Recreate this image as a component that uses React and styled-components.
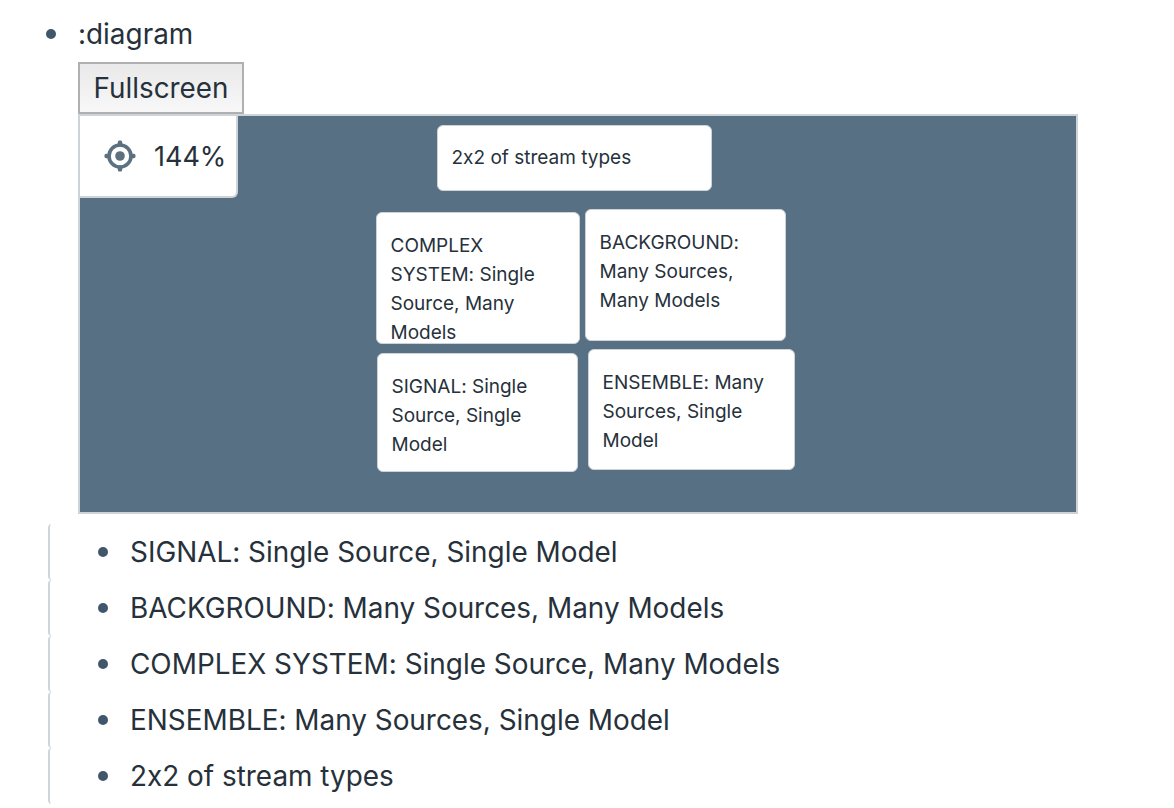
import React from "react";
import styled, { createGlobalStyle } from "styled-components";

const GlobalStyle = createGlobalStyle`
  html, body {
    margin: 0;
    background: #fff;
    overflow: hidden;
  }
  body {
    font-family: Inter, "Noto Sans", sans-serif;
    font-feature-settings: "calt" 0, "liga" 0;
    color: #26313b;
  }
`;

const Page = styled.div`
  width: 1174px;
  height: 808px;
  padding: 6px 0 0 38px;
  box-sizing: border-box;
  overflow: hidden;
`;

const Row = styled.div`
  display: flex;
  align-items: center;
  height: 56px;
  font-size: 27.9px;
  line-height: 56px;
  white-space: nowrap;
`;

const Dot = styled.span`
  flex: none;
  width: 10px;
  height: 10px;
  border-radius: 50%;
  background: #3f566b;
  margin-right: 22px;
  margin-left: 8px;
`;

const Body = styled.div`
  margin-left: 40px;
`;

const FullscreenButton = styled.button`
  display: block;
  width: 166px;
  height: 52px;
  padding: 0;
  box-sizing: border-box;
  border: 2px solid #b0b0b0;
  border-radius: 0;
  background: linear-gradient(#e9e9e9, #f8f8f8);
  font: inherit;
  font-feature-settings: inherit;
  font-size: 27.8px;
  color: #26313b;
`;

const Canvas = styled.div`
  position: relative;
  width: 1000px;
  height: 400px;
  box-sizing: border-box;
  border: 2px solid #ced3d8;
  background: #587084;
`;

const ZoomControl = styled.div`
  position: absolute;
  left: 0;
  top: 0;
  width: 158px;
  height: 82px;
  box-sizing: border-box;
  display: flex;
  align-items: center;
  gap: 18px;
  padding-left: 24px;
  background: #fff;
  border-right: 2px solid #ced3d8;
  border-bottom: 2px solid #ced3d8;
  border-bottom-right-radius: 6px;
  font-size: 27px;
`;

const Node = styled.div`
  position: absolute;
  left: ${(p) => p.$x}px;
  top: ${(p) => p.$y}px;
  width: ${(p) => p.$w}px;
  height: ${(p) => p.$h}px;
  box-sizing: border-box;
  padding: ${(p) => p.$pt}px 13px 0 13.5px;
  background: #fff;
  border: 1px solid #ccd3d9;
  border-radius: 6px;
  font-size: 19px;
  line-height: 29px;
  overflow: hidden;
`;

const SubList = styled.div`
  margin: 10px 0 0 10px;
`;

const SubRow = styled(Row)`
  border-left: 2px solid #cdd5dd;
  border-radius: 4px;
  padding-left: 48px;
  & > ${Dot} {
    margin-left: 0;
    margin-right: 22px;
  }
`;

const nodes = [
  { x: 357, y: 9, w: 275, h: 66, pt: 17, text: "2x2 of stream types" },
  { x: 296, y: 96, w: 204, h: 132, pt: 18, text: "COMPLEX SYSTEM: Single Source, Many Models" },
  { x: 505, y: 93, w: 201, h: 132, pt: 18, text: "BACKGROUND: Many Sources, Many Models" },
  { x: 297, y: 237, w: 201, h: 119, pt: 18, text: "SIGNAL: Single Source, Single Model" },
  { x: 508, y: 233, w: 207, h: 121, pt: 18, text: "ENSEMBLE: Many Sources, Single Model" },
];

const items = [
  "SIGNAL: Single Source, Single Model",
  "BACKGROUND: Many Sources, Many Models",
  "COMPLEX SYSTEM: Single Source, Many Models",
  "ENSEMBLE: Many Sources, Single Model",
  "2x2 of stream types",
];

function TargetIcon() {
  return (
    <svg width="32" height="32" viewBox="0 0 32 32" fill="none">
      <circle cx="16" cy="16" r="11" stroke="#5c7080" strokeWidth="3.6" />
      <circle cx="16" cy="16" r="4.8" fill="#5c7080" />
      <rect x="13.8" y="0.5" width="4.4" height="6" rx="1.6" fill="#5c7080" />
      <rect x="13.8" y="25.5" width="4.4" height="6" rx="1.6" fill="#5c7080" />
      <rect x="0.5" y="13.8" width="6" height="4.4" rx="1.6" fill="#5c7080" />
      <rect x="25.5" y="13.8" width="6" height="4.4" rx="1.6" fill="#5c7080" />
    </svg>
  );
}

export default function App() {
  return (
    <Page>
      <GlobalStyle />
      <Row>
        <Dot />
        :diagram
      </Row>
      <Body>
        <FullscreenButton>Fullscreen</FullscreenButton>
        <Canvas>
          <ZoomControl>
            <TargetIcon />
            144%
          </ZoomControl>
          {nodes.map((n) => (
            <Node key={n.text} $x={n.x} $y={n.y} $w={n.w} $h={n.h} $pt={n.pt}>
              {n.text}
            </Node>
          ))}
        </Canvas>
      </Body>
      <SubList>
        {items.map((item) => (
          <SubRow key={item}>
            <Dot />
            {item}
          </SubRow>
        ))}
      </SubList>
    </Page>
  );
}
